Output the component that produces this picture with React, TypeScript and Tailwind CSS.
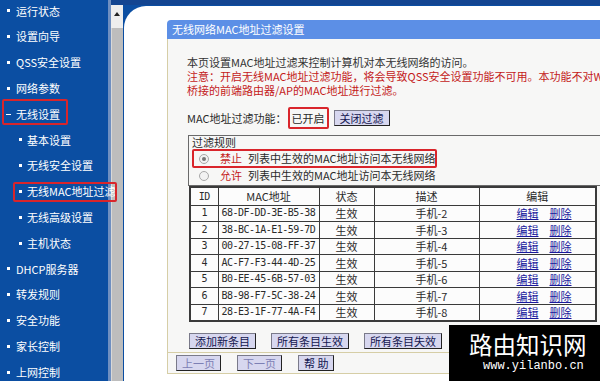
import React from 'react';

const sideItems: { label: string; sub?: boolean; open?: boolean; marked?: 'top' | 'sub' }[] = [
  { label: '运行状态' },
  { label: '设置向导' },
  { label: 'QSS安全设置' },
  { label: '网络参数' },
  { label: '无线设置', open: true, marked: 'top' },
  { label: '基本设置', sub: true },
  { label: '无线安全设置', sub: true },
  { label: '无线MAC地址过滤', sub: true, marked: 'sub' },
  { label: '无线高级设置', sub: true },
  { label: '主机状态', sub: true },
  { label: 'DHCP服务器' },
  { label: '转发规则' },
  { label: '安全功能' },
  { label: '家长控制' },
  { label: '上网控制' },
];

const macRows = [
  { id: 1, mac: '68-DF-DD-3E-B5-38', desc: '手机-2' },
  { id: 2, mac: '38-BC-1A-E1-59-7D', desc: '手机-3' },
  { id: 3, mac: '00-27-15-08-FF-37', desc: '手机-4' },
  { id: 4, mac: 'AC-F7-F3-44-4D-25', desc: '手机-5' },
  { id: 5, mac: 'B0-EE-45-6B-57-03', desc: '手机-6' },
  { id: 6, mac: 'B8-98-F7-5C-38-24', desc: '手机-7' },
  { id: 7, mac: '28-E3-1F-77-4A-F4', desc: '手机-8' },
];

const Sidebar: React.FC = () => (
  <div className="relative z-10 w-[108px] shrink-0 bg-[#0b4ea2]">
    <div className="-mt-[2px]">
      {sideItems.map(item => (
        <div key={item.label} className="relative flex h-[25.8px] items-center whitespace-nowrap text-[11px] text-white">
          {item.open ? (
            <span className="ml-[6px] mr-[5px] h-[1px] w-[5px] shrink-0 bg-white" />
          ) : (
            <span className={`${item.sub ? 'ml-[19px] mr-[5px]' : 'ml-[7px] mr-[6px]'} h-[3px] w-[3px] shrink-0 bg-white`} />
          )}
          <span className="shrink-0">{item.label}</span>
          {item.marked === 'top' && (
            <span className="absolute left-[2px] top-[-2px] h-[26px] w-[66px] rounded-[2px] border-2 border-[#d9252b]" />
          )}
          {item.marked === 'sub' && (
            <span className="absolute left-[13px] top-[3px] h-[20px] w-[104px] rounded-[2px] border-2 border-[#d9252b]" />
          )}
        </div>
      ))}
    </div>
  </div>
);

const Scrollbar: React.FC = () => (
  <div className="flex w-[12px] shrink-0 flex-col">
    <div className="flex h-[23px] items-start justify-center bg-[#eeeeee] pt-[7px]">
      <span className="h-0 w-0 border-x-[3px] border-b-[4px] border-x-transparent border-b-[#222]" />
    </div>
    <div className="flex-1 border-l border-[#d8d8d8] bg-[#bdbdbd]" />
  </div>
);

const Btn: React.FC<{ children: React.ReactNode; dim?: boolean; className?: string }> = ({ children, dim, className }) => (
  <button
    className={`h-[16px] border border-[#7a7a8a] border-b-[#222] border-r-[#222] bg-[#d7d7ef] px-[5px] text-[11px] leading-[14px] ${dim ? 'text-[#7d80b4]' : 'text-[#141650]'} ${className ?? ''}`}
  >
    {children}
  </button>
);

const Radio: React.FC<{ checked?: boolean }> = ({ checked }) => (
  <span className="flex h-[10px] w-[10px] items-center justify-center rounded-full border border-[#a8a8a8] bg-[#f2f2f2]">
    {checked && <span className="h-[4px] w-[4px] rounded-full bg-[#777]" />}
  </span>
);

const mono = "font-['DejaVu_Sans_Mono',monospace] text-[10px] tracking-[-0.5px]";

const Panel: React.FC = () => (
  <div className="w-[440px] text-[11px] text-[#2a2a2a]">
    <div className="h-[19px] rounded-tl-[4px] bg-[#5c8fe6] pl-[5px] leading-[19px] text-white">无线网络MAC地址过滤设置</div>
    <div className="border-b border-l border-[#d6cea6] bg-[#f7f7f6]">
      <div className="pl-[19px] pt-[16px]">
        <div className="whitespace-nowrap leading-[14px]">
          <div className="text-[#333]">本页设置MAC地址过滤来控制计算机对本无线网络的访问。</div>
          <div className="text-[#c41a1a]">注意：开启无线MAC地址过滤功能，将会导致QSS安全设置功能不可用。本功能不对WDS</div>
          <div className="text-[#c41a1a]">桥接的前端路由器/AP的MAC地址进行过滤。</div>
        </div>

        <div className="mt-[10px] flex h-[22px] items-center">
          <span>MAC地址过滤功能：</span>
          <span className="ml-[1px] flex h-[22px] items-center rounded-[2px] border-2 border-[#d9252b] px-[2px]">已开启</span>
          <Btn className="ml-[5px]">关闭过滤</Btn>
        </div>

        <div className="ml-[1px] mt-[6px] h-[51px] border border-[#6a6a6a] pl-[3px]">
          <div className="leading-[12px]">过滤规则</div>
          <div className="relative mt-[2px] flex h-[17px] items-center">
            <span className="ml-[7px]"><Radio checked /></span>
            <span className="ml-[11px] text-[#c41a1a]">禁止</span>
            <span className="ml-[6px]">列表中生效的MAC地址访问本无线网络</span>
            <span className="absolute left-0 top-[-1px] h-[19px] w-[245px] rounded-[2px] border-2 border-[#d9252b]" />
          </div>
          <div className="flex h-[17px] items-center">
            <span className="ml-[7px]"><Radio /></span>
            <span className="ml-[11px] text-[#c41a1a]">允许</span>
            <span className="ml-[6px]">列表中生效的MAC地址访问本无线网络</span>
          </div>
        </div>

        <table className="ml-[2px] w-[408px] border-collapse border-2 border-[#3a3a3a] bg-[#fcfcfc]">
          <thead>
            <tr className="h-[18px]">
              <th className={`w-[28px] border border-[#3a3a3a] font-normal ${mono}`}>ID</th>
              <th className="w-[101px] border border-[#3a3a3a] font-normal">MAC地址</th>
              <th className="w-[55px] border border-[#3a3a3a] font-normal">状态</th>
              <th className="w-[105px] border border-[#3a3a3a] font-normal">描述</th>
              <th className="border border-[#3a3a3a] font-normal">编辑</th>
            </tr>
          </thead>
          <tbody>
            {macRows.map(r => (
              <tr key={r.id} className="h-[16.5px] leading-[14px]">
                <td className={`border border-[#3a3a3a] text-center ${mono}`}>{r.id}</td>
                <td className={`border border-[#3a3a3a] pl-[3px] ${mono}`}>{r.mac}</td>
                <td className="border border-[#3a3a3a] text-center">生效</td>
                <td className="border border-[#3a3a3a] pl-[41px]">{r.desc}</td>
                <td className="border border-[#3a3a3a] pl-[37px]">
                  <span className="text-[#1a1a9c] underline">编辑</span>
                  <span className="ml-[11px] text-[#1a1a9c] underline">删除</span>
                </td>
              </tr>
            ))}
          </tbody>
        </table>

        <div className="flex gap-[15px] pb-[3px] pl-[2px] pt-[11px]">
          <Btn>添加新条目</Btn>
          <Btn>所有条目生效</Btn>
          <Btn>所有条目失效</Btn>
        </div>
      </div>
      <div className="flex h-[21px] items-start gap-[16px] border-t border-[#d6cea6] pl-[8px] pt-[2px]">
        <Btn dim>上一页</Btn>
        <Btn dim>下一页</Btn>
        <Btn>帮 助</Btn>
      </div>
    </div>
  </div>
);

const App: React.FC = () => (
  <div className="relative flex h-[381px] w-[600px] overflow-hidden bg-[#0b4ea2] font-['Noto_Sans_CJK_SC','Liberation_Sans',sans-serif]">
    <Sidebar />
    <div className="w-[3px] shrink-0 bg-[#6f8fc0]" />
    <div className="flex min-w-0 flex-1 flex-col">
      <div className="h-[5px] shrink-0 bg-[#134591]" />
      <div className="flex min-h-0 flex-1">
        <Scrollbar />
        <div className="min-w-0 flex-1 pl-[1px] pt-[1px]">
          <div className="h-full overflow-hidden rounded-tl-[22px] bg-white pl-[43px] pt-[14px]">
            <Panel />
          </div>
        </div>
      </div>
    </div>

    {/* watermark */}
    <div className="absolute bottom-0 right-0 h-[56px] w-[151px] bg-black pl-[20px] pt-[6px] text-white">
      <div className="text-[23.5px] leading-[26px]">路由知识网</div>
      <div className="ml-[14px] mt-[2px] font-['Liberation_Mono',monospace] text-[12px] leading-[14px]">www.yilanbo.cn</div>
    </div>
  </div>
);

export default App;
